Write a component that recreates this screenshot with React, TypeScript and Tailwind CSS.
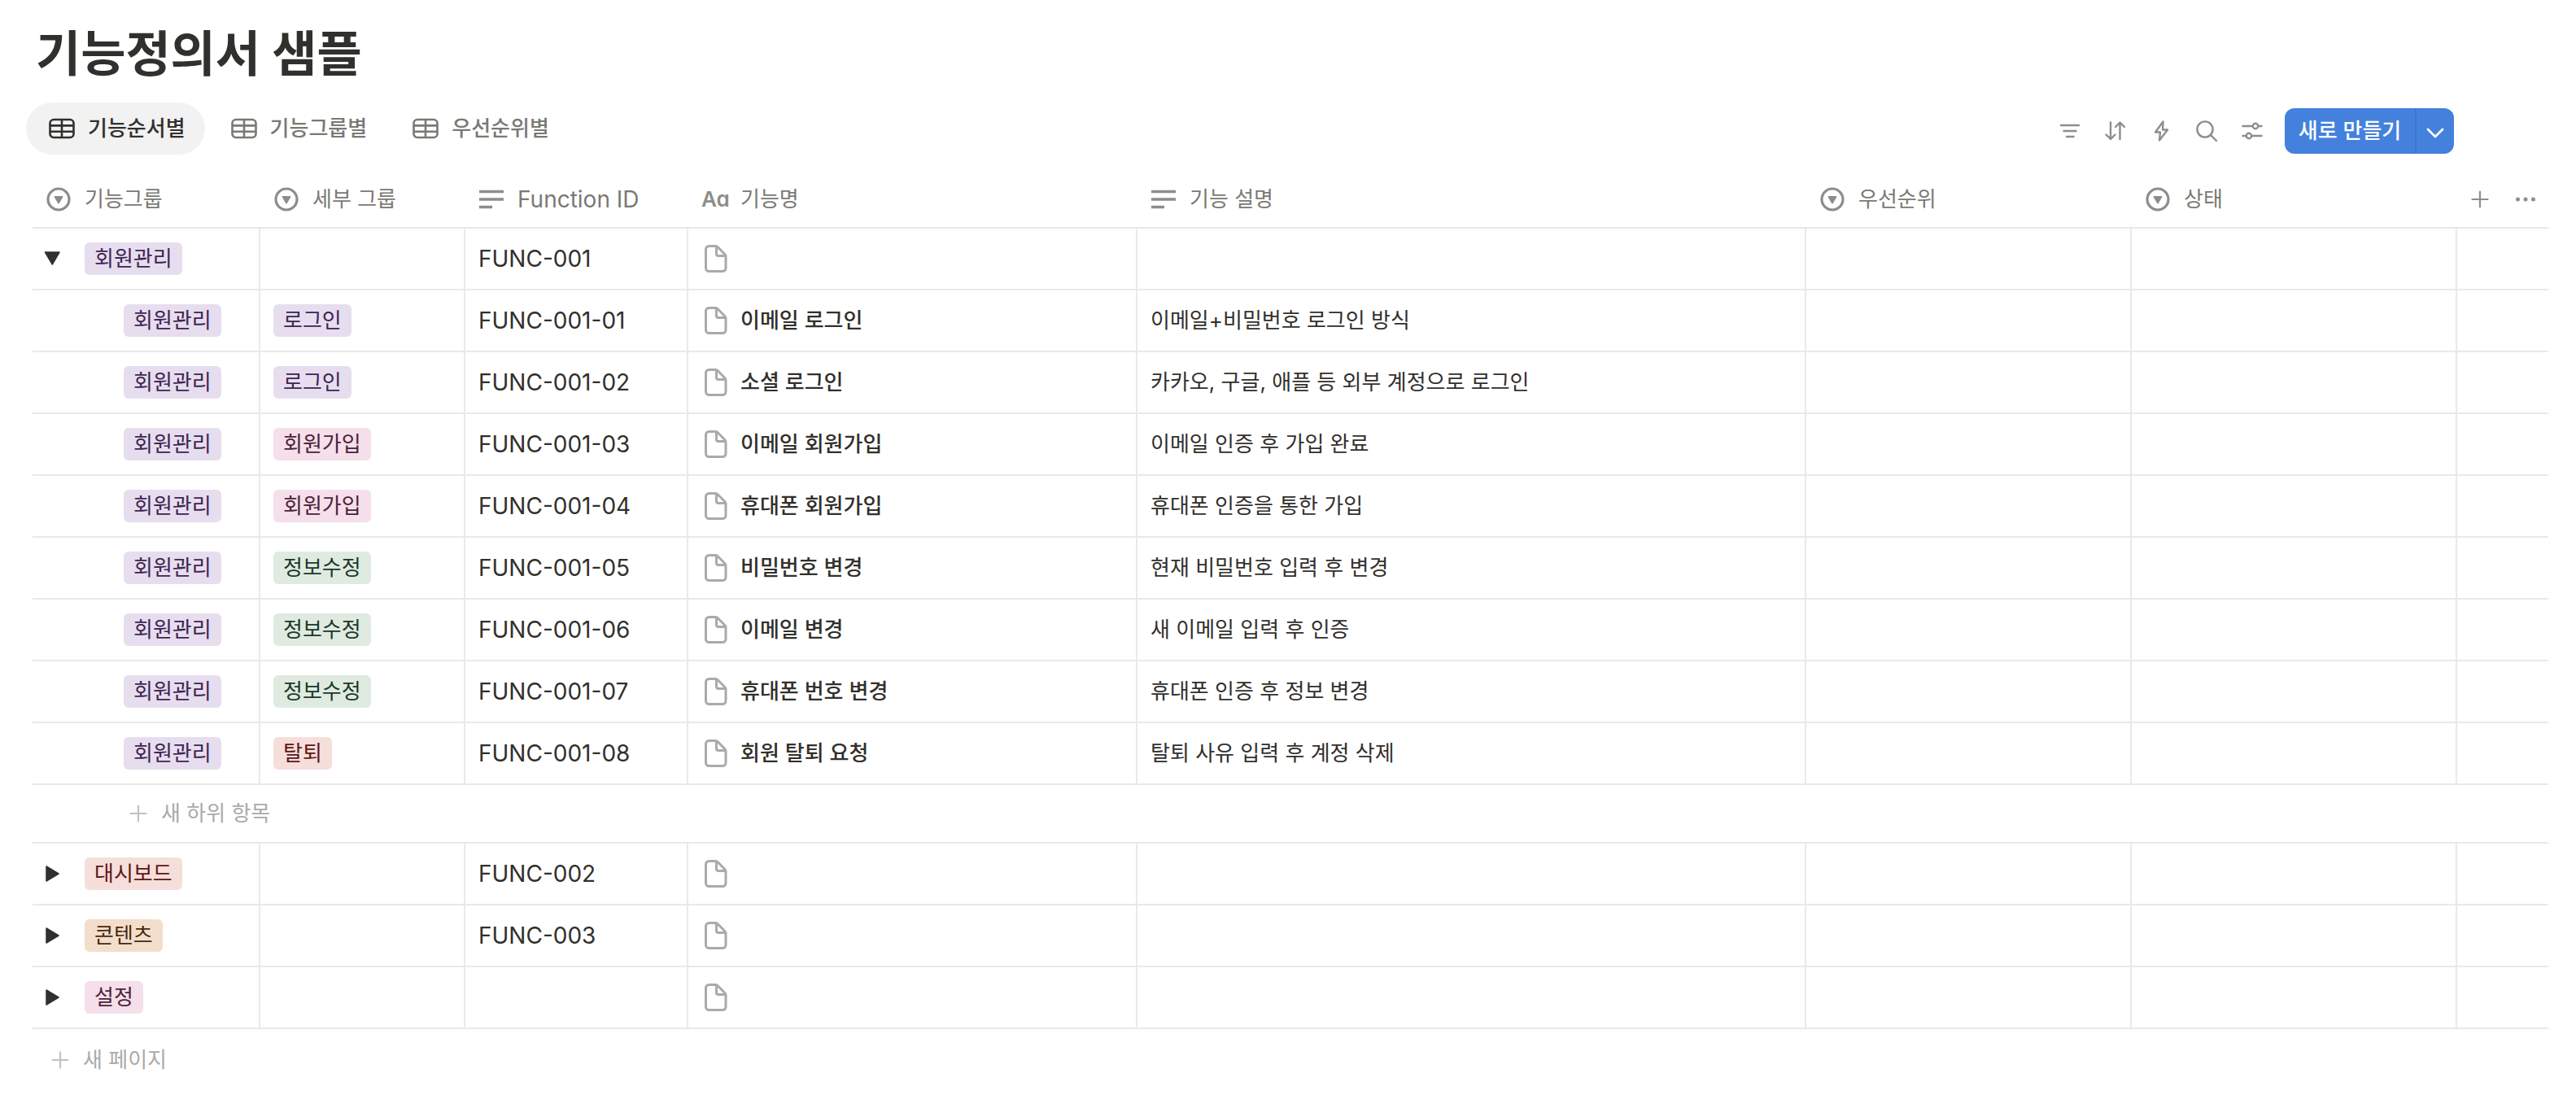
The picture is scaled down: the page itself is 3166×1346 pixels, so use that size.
import { useState } from "react";
import type { ReactNode } from "react";

type TagColor = "purple" | "pink" | "green" | "red" | "orange";

interface TagData {
  label: string;
  color: TagColor;
}

interface FeatureRow {
  sub: TagData;
  id: string;
  name: string;
  description: string;
}

interface FeatureGroup {
  tag: TagData;
  id: string;
  rows: FeatureRow[];
}

const TAG_STYLES: Record<TagColor, string> = {
  purple: "bg-[#e6deee] text-[#412454]",
  pink: "bg-[#f4dfeb] text-[#4c2337]",
  green: "bg-[#dfebe0] text-[#1c3829]",
  red: "bg-[#f6dedb] text-[#5d1715]",
  orange: "bg-[#f3decc] text-[#49290e]",
};

const login: TagData = { label: "로그인", color: "purple" };
const signup: TagData = { label: "회원가입", color: "pink" };
const edit: TagData = { label: "정보수정", color: "green" };
const leave: TagData = { label: "탈퇴", color: "red" };

const GROUPS: FeatureGroup[] = [
  {
    tag: { label: "회원관리", color: "purple" },
    id: "FUNC-001",
    rows: [
      { sub: login, id: "FUNC-001-01", name: "이메일 로그인", description: "이메일+비밀번호 로그인 방식" },
      { sub: login, id: "FUNC-001-02", name: "소셜 로그인", description: "카카오, 구글, 애플 등 외부 계정으로 로그인" },
      { sub: signup, id: "FUNC-001-03", name: "이메일 회원가입", description: "이메일 인증 후 가입 완료" },
      { sub: signup, id: "FUNC-001-04", name: "휴대폰 회원가입", description: "휴대폰 인증을 통한 가입" },
      { sub: edit, id: "FUNC-001-05", name: "비밀번호 변경", description: "현재 비밀번호 입력 후 변경" },
      { sub: edit, id: "FUNC-001-06", name: "이메일 변경", description: "새 이메일 입력 후 인증" },
      { sub: edit, id: "FUNC-001-07", name: "휴대폰 번호 변경", description: "휴대폰 인증 후 정보 변경" },
      { sub: leave, id: "FUNC-001-08", name: "회원 탈퇴 요청", description: "탈퇴 사유 입력 후 계정 삭제" },
    ],
  },
  { tag: { label: "대시보드", color: "red" }, id: "FUNC-002", rows: [] },
  { tag: { label: "콘텐츠", color: "orange" }, id: "FUNC-003", rows: [] },
  { tag: { label: "설정", color: "pink" }, id: "", rows: [] },
];

const TABS = ["기능순서별", "기능그룹별", "우선순위별"];

function TableIcon() {
  return (
    <svg className="h-[26px] w-8 shrink-0" viewBox="0 0 32 26" fill="none" stroke="currentColor" strokeWidth="2.6">
      <rect x="1.5" y="2" width="29" height="22" rx="4.5" />
      <path d="M1.5 9.4h29M1.5 16.8h29M16 2v22" />
    </svg>
  );
}

function SelectIcon() {
  return (
    <svg className="size-8 shrink-0 text-[#8e8d8a]" viewBox="0 0 32 32" fill="none">
      <circle cx="16" cy="16" r="13" stroke="currentColor" strokeWidth="3.2" />
      <path
        d="M11.5 12.8h9l-4.5 7.700z"
        fill="currentColor"
        stroke="currentColor"
        strokeWidth="1.8"
        strokeLinejoin="round"
      />
    </svg>
  );
}

function TextIcon() {
  return (
    <svg className="size-8 shrink-0 text-[#8e8d8a]" viewBox="0 0 32 32" stroke="currentColor" strokeWidth="3.4">
      <path d="M1 6.5h30M1 16h30M1 25.5h16" />
    </svg>
  );
}

function TitleIcon() {
  return (
    <span className="w-8 shrink-0 text-[26px] leading-8 font-semibold text-[#8e8d8a] [font-feature-settings:'cv11']">
      Aa
    </span>
  );
}

function PageIcon() {
  return (
    <svg
      className="size-9 shrink-0 text-[#abaaa8]"
      viewBox="0 0 36 36"
      fill="none"
      stroke="currentColor"
      strokeWidth="3"
      strokeLinejoin="round"
    >
      <path d="M9.5 2.5h8.2a3 3 0 0 1 2.200 1L29 12.800a3 3 0 0 1 1 2.200V29.500a4 4 0 0 1-4 4H9.500a4 4 0 0 1-4-4V6.500a4 4 0 0 1 4-4z" />
      <path d="M18.500 3V12a2.500 2.500 0 0 0 2.500 2.500h9" />
    </svg>
  );
}

function PlusIcon({ className }: { className: string }) {
  return (
    <svg className={className} viewBox="0 0 24 24" stroke="currentColor" strokeWidth="2.2" strokeLinecap="round">
      <path d="M12 2.500v19M2.500 12h19" />
    </svg>
  );
}

function ToolButton({ label, children }: { label: string; children: ReactNode }) {
  return (
    <button aria-label={label} className="flex size-14 items-center justify-center">
      <svg
        className="size-8"
        viewBox="0 0 32 32"
        fill="none"
        stroke="currentColor"
        strokeWidth="2.4"
        strokeLinecap="round"
        strokeLinejoin="round"
      >
        {children}
      </svg>
    </button>
  );
}

function Tag({ label, color }: TagData) {
  return (
    <span className={`inline-block h-10 rounded-md px-3 text-[26px] leading-10 ${TAG_STYLES[color]}`}>{label}</span>
  );
}

function HeaderCell({ icon, children }: { icon: ReactNode; children: ReactNode }) {
  return (
    <th scope="col" className="border-b-2 border-[#e9e9e8] px-4 text-left font-normal">
      <div className="flex items-center gap-4">
        {icon}
        {children}
      </div>
    </th>
  );
}

function Cell({ children }: { children?: ReactNode }) {
  return <td className="border-r-2 border-b-2 border-[#e9e9e8] px-4 last:border-r-0">{children}</td>;
}

function NameCell({ name }: { name?: string }) {
  return (
    <Cell>
      <div className="flex items-center gap-3">
        <PageIcon />
        <span className="font-medium">{name}</span>
      </div>
    </Cell>
  );
}

function GroupRows({ group, defaultOpen }: { group: FeatureGroup; defaultOpen: boolean }) {
  const [open, setOpen] = useState(defaultOpen);

  return (
    <tbody>
      <tr className="h-[76px]">
        <Cell>
          <div className="-ml-1 flex items-center gap-4">
            <button aria-label={group.tag.label} aria-expanded={open} onClick={() => setOpen(!open)}>
              <svg
                className="h-8 w-9"
                viewBox="0 0 36 32"
                fill="currentColor"
                stroke="currentColor"
                strokeWidth="1.5"
                strokeLinejoin="round"
              >
                {open ? <path d="M3.500 8h17.500l-8.700 15z" /> : <path d="M5 7l15 9-15 9z" />}
              </svg>
            </button>
            <Tag {...group.tag} />
          </div>
        </Cell>
        <Cell />
        <Cell>
          <span className="text-[28px]">{group.id}</span>
        </Cell>
        <NameCell />
        <Cell />
        <Cell />
        <Cell />
        <Cell />
      </tr>
      {open &&
        group.rows.map((row) => (
          <tr key={row.id} className="h-[76px]">
            <Cell>
              <div className="flex pl-24">
                <Tag {...group.tag} />
              </div>
            </Cell>
            <Cell>
              <div className="flex">
                <Tag {...row.sub} />
              </div>
            </Cell>
            <Cell>
              <span className="text-[28px]">{row.id}</span>
            </Cell>
            <NameCell name={row.name} />
            <Cell>{row.description}</Cell>
            <Cell />
            <Cell />
            <Cell />
          </tr>
        ))}
      {open && (
        <tr className="h-[72px]">
          <td colSpan={8} className="border-b-2 border-[#e9e9e8] pl-[118px]">
            <button className="flex items-center gap-4 text-[#abaaa8]">
              <PlusIcon className="size-6 text-[#c4c2be]" />새 하위 항목
            </button>
          </td>
        </tr>
      )}
    </tbody>
  );
}

function App() {
  const [activeTab, setActiveTab] = useState(TABS[0]);

  return (
    <main className="min-h-screen bg-white pt-6 pr-[34px] pl-10 font-['Inter','Noto_Sans_CJK_KR',sans-serif] text-[26px] leading-10 text-[#31302c]">
      <h1 className="pl-1 text-[60px] leading-[84px] font-bold">기능정의서 샘플</h1>

      <div className="mt-[18px] -ml-2 flex items-end justify-between pr-[116px]">
        <div role="tablist" className="flex gap-1">
          {TABS.map((tab) => (
            <button
              key={tab}
              role="tab"
              aria-selected={tab === activeTab}
              onClick={() => setActiveTab(tab)}
              className={`flex h-16 items-center gap-4 rounded-full pr-6 pl-7 font-medium ${
                tab === activeTab ? "bg-[#f2f2f2]" : "text-[#7a7974]"
              }`}
            >
              <TableIcon />
              {tab}
            </button>
          ))}
        </div>

        <div className="flex items-center pb-px text-[#8e8d8a]">
          <ToolButton label="필터">
            <path d="M5 9h22M8.500 16h15M12 23h8.500" />
          </ToolButton>
          <ToolButton label="정렬">
            <path d="M10 5.500v20.500M4.500 20.500L10 26l5.500-5.500M21.500 26V5.500M16 11l5.500-5.500L27 11" />
          </ToolButton>
          <ToolButton label="자동화">
            <path d="M18.500 4.500L9 17.500h6l-1 10L24 14.500h-6z" />
          </ToolButton>
          <ToolButton label="검색">
            <circle cx="14" cy="14" r="9.600" />
            <path d="M21 21l7 7" />
          </ToolButton>
          <ToolButton label="설정">
            <path d="M4.500 10h12M23.500 10h4M4.500 22h4M15.500 22h12" />
            <circle cx="20" cy="10" r="3.200" />
            <circle cx="12" cy="22" r="3.200" />
          </ToolButton>
          <div className="ml-3 flex h-14 overflow-hidden rounded-xl bg-[#4481dd] font-medium text-white">
            <button className="w-40">새로 만들기</button>
            <button aria-label="더 보기" className="flex w-12 items-center justify-center border-l-2 border-[#3f76c8]">
              <svg
                className="mt-1 h-4 w-6"
                viewBox="0 0 24 16"
                fill="none"
                stroke="currentColor"
                strokeWidth="2.8"
                strokeLinecap="round"
                strokeLinejoin="round"
              >
                <path d="M3 4l9 9 9-9" />
              </svg>
            </button>
          </div>
        </div>
      </div>

      <table className="mt-5 w-full table-fixed border-separate border-spacing-0">
        <colgroup>
          <col className="w-[280px]" />
          <col className="w-[252px]" />
          <col className="w-[274px]" />
          <col className="w-[552px]" />
          <col />
          <col className="w-[400px]" />
          <col className="w-[400px]" />
          <col className="w-[112px]" />
        </colgroup>
        <thead>
          <tr className="h-[71px] text-[#7a7974]">
            <HeaderCell icon={<SelectIcon />}>기능그룹</HeaderCell>
            <HeaderCell icon={<SelectIcon />}>세부 그룹</HeaderCell>
            <HeaderCell icon={<TextIcon />}>
              <span className="text-[28px]">Function ID</span>
            </HeaderCell>
            <HeaderCell icon={<TitleIcon />}>기능명</HeaderCell>
            <HeaderCell icon={<TextIcon />}>기능 설명</HeaderCell>
            <HeaderCell icon={<SelectIcon />}>우선순위</HeaderCell>
            <HeaderCell icon={<SelectIcon />}>상태</HeaderCell>
            <td className="border-b-2 border-[#e9e9e8] pl-4">
              <div className="flex items-center gap-8 text-[#8e8d8a]">
                <button aria-label="속성 추가">
                  <PlusIcon className="size-6" />
                </button>
                <button aria-label="속성 더 보기">
                  <svg className="size-6" viewBox="0 0 24 24" fill="currentColor">
                    <circle cx="2.500" cy="12" r="2.500" />
                    <circle cx="12" cy="12" r="2.500" />
                    <circle cx="21.500" cy="12" r="2.500" />
                  </svg>
                </button>
              </div>
            </td>
          </tr>
        </thead>
        {GROUPS.map((group, i) => (
          <GroupRows key={group.tag.label} group={group} defaultOpen={i === 0} />
        ))}
      </table>

      <button className="flex h-[76px] items-center gap-4 pl-[22px] text-[#abaaa8]">
        <PlusIcon className="size-6 text-[#c4c2be]" />새 페이지
      </button>
    </main>
  );
}

export default App;
